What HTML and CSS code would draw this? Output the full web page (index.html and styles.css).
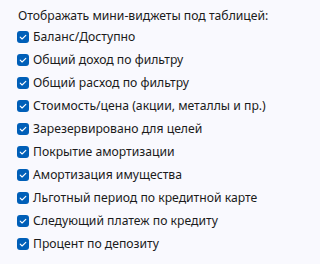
FILE: index.html
```html
<!DOCTYPE html>
<html lang="ru">
<head>
<meta charset="utf-8">
<link rel="stylesheet" href="styles.css">
</head>
<body>
<div class="panel">
  <div class="title">Отображать мини-виджеты под таблицей:</div>
  <ul class="list">
    <li class="item"><span class="box"><svg viewBox="0 0 12 12" width="12" height="12"><path d="M3.2 6.2 L5.1 8 L8.8 4.3" fill="none" stroke="#fff" stroke-width="1.1" stroke-linecap="round" stroke-linejoin="round"/></svg></span><span class="label">Баланс/Доступно</span></li>
    <li class="item"><span class="box"><svg viewBox="0 0 12 12" width="12" height="12"><path d="M3.2 6.2 L5.1 8 L8.8 4.3" fill="none" stroke="#fff" stroke-width="1.1" stroke-linecap="round" stroke-linejoin="round"/></svg></span><span class="label">Общий доход по фильтру</span></li>
    <li class="item"><span class="box"><svg viewBox="0 0 12 12" width="12" height="12"><path d="M3.2 6.2 L5.1 8 L8.8 4.3" fill="none" stroke="#fff" stroke-width="1.1" stroke-linecap="round" stroke-linejoin="round"/></svg></span><span class="label">Общий расход по фильтру</span></li>
    <li class="item"><span class="box"><svg viewBox="0 0 12 12" width="12" height="12"><path d="M3.2 6.2 L5.1 8 L8.8 4.3" fill="none" stroke="#fff" stroke-width="1.1" stroke-linecap="round" stroke-linejoin="round"/></svg></span><span class="label">Стоимость/цена (акции, металлы и пр.)</span></li>
    <li class="item"><span class="box"><svg viewBox="0 0 12 12" width="12" height="12"><path d="M3.2 6.2 L5.1 8 L8.8 4.3" fill="none" stroke="#fff" stroke-width="1.1" stroke-linecap="round" stroke-linejoin="round"/></svg></span><span class="label">Зарезервировано для целей</span></li>
    <li class="item"><span class="box"><svg viewBox="0 0 12 12" width="12" height="12"><path d="M3.2 6.2 L5.1 8 L8.8 4.3" fill="none" stroke="#fff" stroke-width="1.1" stroke-linecap="round" stroke-linejoin="round"/></svg></span><span class="label">Покрытие амортизации</span></li>
    <li class="item"><span class="box"><svg viewBox="0 0 12 12" width="12" height="12"><path d="M3.2 6.2 L5.1 8 L8.8 4.3" fill="none" stroke="#fff" stroke-width="1.1" stroke-linecap="round" stroke-linejoin="round"/></svg></span><span class="label">Амортизация имущества</span></li>
    <li class="item"><span class="box"><svg viewBox="0 0 12 12" width="12" height="12"><path d="M3.2 6.2 L5.1 8 L8.8 4.3" fill="none" stroke="#fff" stroke-width="1.1" stroke-linecap="round" stroke-linejoin="round"/></svg></span><span class="label">Льготный период по кредитной карте</span></li>
    <li class="item"><span class="box"><svg viewBox="0 0 12 12" width="12" height="12"><path d="M3.2 6.2 L5.1 8 L8.8 4.3" fill="none" stroke="#fff" stroke-width="1.1" stroke-linecap="round" stroke-linejoin="round"/></svg></span><span class="label">Следующий платеж по кредиту</span></li>
    <li class="item"><span class="box"><svg viewBox="0 0 12 12" width="12" height="12"><path d="M3.2 6.2 L5.1 8 L8.8 4.3" fill="none" stroke="#fff" stroke-width="1.1" stroke-linecap="round" stroke-linejoin="round"/></svg></span><span class="label">Процент по депозиту</span></li>
  </ul>
</div>
</body>
</html>
```

FILE: styles.css
```css
html, body {
  margin: 0;
  padding: 0;
  background: #f9f9fe;
}
body {
  font-family: "Noto Sans", "Open Sans", sans-serif;
  font-size: 12.2px;
  color: #1b1b1b;
}
.panel {
  padding: 8px 0 0 17px;
}
.title {
  line-height: 16px;
  height: 17px;
  padding-left: 1px;
}
.list {
  list-style: none;
  margin: 0;
  padding: 0;
  display: flex;
  flex-direction: column;
}
.item {
  display: flex;
  align-items: center;
  gap: 4px;
  height: 23px;
}
.box {
  width: 12px;
  height: 12px;
  border-radius: 3px;
  background: #005fb8;
  display: flex;
  align-items: center;
  justify-content: center;
}
.box svg {
  display: block;
}
.label {
  line-height: 16px;
}
```
